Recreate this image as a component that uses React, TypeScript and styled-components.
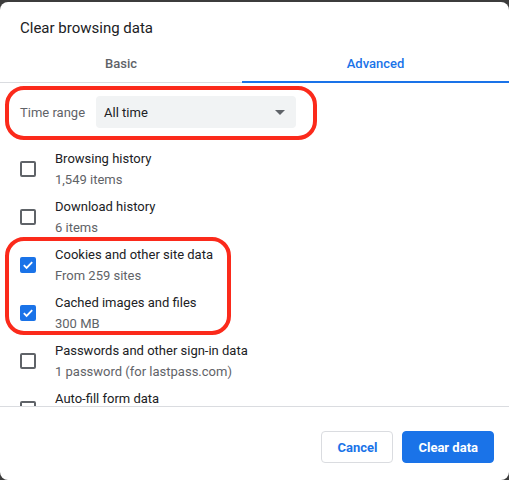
import styled, { createGlobalStyle } from 'styled-components';

const GlobalStyle = createGlobalStyle`
  html, body {
    margin: 0;
    padding: 0;
    background: #3c3c3c;
  }
  body {
    font-family: Roboto, "Liberation Sans", Arial, sans-serif;
    -webkit-font-smoothing: antialiased;
  }
`;

const Dialog = styled.div`
  position: relative;
  margin-top: 2px;
  width: 509px;
  height: 478px;
  background: #fff;
  border-radius: 8px;
  display: flex;
  flex-direction: column;
  overflow: hidden;
`;

const Title = styled.h1`
  margin: 0;
  padding: 17px 20px 0;
  height: 25px;
  font-size: 15px;
  font-weight: 400;
  color: #202124;
`;

const Tabs = styled.div`
  display: grid;
  grid-template-columns: 242px 1fr;
  height: 38px;
  border-bottom: 1px solid #dadce0;
`;

const Tab = styled.div<{ $active?: boolean }>`
  display: flex;
  align-items: center;
  justify-content: center;
  font-size: 13px;
  font-weight: 500;
  color: ${(p) => (p.$active ? '#1a73e8' : '#5f6368')};
  border-bottom: 2px solid ${(p) => (p.$active ? '#1a73e8' : 'transparent')};
  margin-bottom: -1px;
  padding-top: 2px;
`;

const Body = styled.div`
  flex: 1;
  overflow: hidden;
  padding-top: 13px;
`;

const RangeRow = styled.div`
  display: flex;
  align-items: center;
  gap: 11px;
  padding: 0 20px;
  height: 32px;
  margin-bottom: 17px;
`;

const RangeLabel = styled.span`
  font-size: 13px;
  color: #5f6368;
`;

const Select = styled.div`
  display: flex;
  align-items: center;
  justify-content: space-between;
  box-sizing: border-box;
  width: 200px;
  height: 32px;
  padding: 0 8px;
  background: #f1f3f4;
  border-radius: 4px;
  font-size: 13px;
  color: #202124;
`;

const Arrow = styled.span`
  width: 0;
  height: 0;
  border-left: 5px solid transparent;
  border-right: 5px solid transparent;
  border-top: 5px solid #5f6368;
  margin-right: 3px;
`;

const Item = styled.div`
  display: flex;
  align-items: flex-start;
  gap: 19px;
  box-sizing: border-box;
  height: 48px;
  padding: 6px 20px 0;
`;

const Box = styled.span<{ $checked?: boolean }>`
  flex: none;
  box-sizing: border-box;
  width: 16px;
  height: 16px;
  margin-top: 10px;
  border-radius: 2px;
  border: 2px solid ${(p) => (p.$checked ? '#1a73e8' : '#5f6368')};
  background: ${(p) => (p.$checked ? '#1a73e8' : 'transparent')};
  display: flex;
  align-items: center;
  justify-content: center;
`;

const Texts = styled.div`
  display: flex;
  flex-direction: column;
  gap: 5px;
  line-height: 16px;
`;

const ItemTitle = styled.span`
  font-size: 13px;
  color: #202124;
`;

const ItemSub = styled.span`
  font-size: 13px;
  color: #5f6368;
`;

const Footer = styled.div`
  display: flex;
  justify-content: flex-end;
  gap: 9px;
  padding: 24px 15px 17px;
  border-top: 1px solid #dadce0;
`;

const Button = styled.button<{ $primary?: boolean }>`
  height: 32px;
  padding: 0 15px;
  border-radius: 4px;
  font-family: inherit;
  font-size: 13px;
  font-weight: 700;
  border: 1px solid ${(p) => (p.$primary ? '#1a73e8' : '#dadce0')};
  background: ${(p) => (p.$primary ? '#1a73e8' : '#fff')};
  color: ${(p) => (p.$primary ? '#fff' : '#1a73e8')};
`;

const Highlight = styled.div<{ $x: number; $y: number; $w: number; $h: number }>`
  position: absolute;
  left: ${(p) => p.$x}px;
  top: ${(p) => p.$y}px;
  width: ${(p) => p.$w}px;
  height: ${(p) => p.$h}px;
  box-sizing: border-box;
  border: 4px solid #fb2a1b;
  border-radius: 19px;
  pointer-events: none;
`;

const Check = () => (
  <svg width="12" height="12" viewBox="0 0 12 12">
    <path d="M1.8 6.2 L4.6 9 L10.2 3.2" fill="none" stroke="#fff" strokeWidth="1.8" />
  </svg>
);

const items = [
  { title: 'Browsing history', sub: '1,549 items', checked: false },
  { title: 'Download history', sub: '6 items', checked: false },
  { title: 'Cookies and other site data', sub: 'From 259 sites', checked: true },
  { title: 'Cached images and files', sub: '300 MB', checked: true },
  { title: 'Passwords and other sign-in data', sub: '1 password (for lastpass.com)', checked: false },
  { title: 'Auto-fill form data', sub: '', checked: false },
];

const App = () => {
  return (
    <>
      <GlobalStyle />
      <Dialog>
        <Title>Clear browsing data</Title>
        <Tabs>
          <Tab>Basic</Tab>
          <Tab $active>Advanced</Tab>
        </Tabs>
        <Body>
          <RangeRow>
            <RangeLabel>Time range</RangeLabel>
            <Select>
              <span>All time</span>
              <Arrow />
            </Select>
          </RangeRow>
          {items.map((it) => (
            <Item key={it.title}>
              <Box $checked={it.checked}>{it.checked && <Check />}</Box>
              <Texts>
                <ItemTitle>{it.title}</ItemTitle>
                {it.sub && <ItemSub>{it.sub}</ItemSub>}
              </Texts>
            </Item>
          ))}
        </Body>
        <Footer>
          <Button>Cancel</Button>
          <Button $primary>Clear data</Button>
        </Footer>
        <Highlight $x={5} $y={84} $w={312} $h={54} />
        <Highlight $x={5} $y={235} $w={226} $h={98} />
      </Dialog>
    </>
  );
};

export default App;
